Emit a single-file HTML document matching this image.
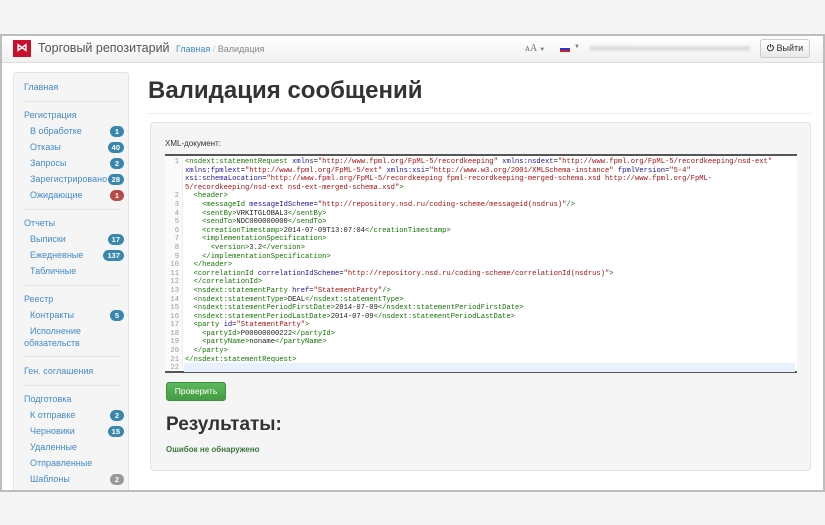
<!DOCTYPE html>
<html><head><meta charset="utf-8"><style>
*{margin:0;padding:0;box-sizing:border-box}
body{width:825px;height:525px;background:#f4f4f4;font-family:"Liberation Sans","Noto Sans CJK SC",sans-serif;position:relative;overflow:hidden}
.win{position:absolute;left:0;top:34px;width:825px;height:458px;background:#fff;border:2px solid #bdbdbd;overflow:hidden}
.nav{position:absolute;left:0;top:0;width:821px;height:27px;background:linear-gradient(#fff,#f0f0f0);border-bottom:1px solid #ddd}
.a{position:absolute;white-space:nowrap}
.side{position:absolute;left:11px;top:36px;width:116px;height:440px;background:#f5f5f5;border:1px solid #e3e3e3;border-radius:3px}
.si{position:absolute;font-size:9px;color:#428bca;white-space:nowrap}
.hr{position:absolute;left:10px;width:96px;border-top:1px solid #e5e5e5}
.b{position:absolute;right:4px;height:11px;border-radius:6px;background:#3a87ad;color:#fff;font-size:7.5px;font-weight:bold;text-align:center;line-height:11px;padding:0 4px;min-width:14px}
.panel{position:absolute;left:148px;top:86px;width:661px;height:349px;background:#f5f5f5;border:1px solid #e3e3e3;border-radius:4px}
.ed{position:absolute;left:14px;top:31px;width:632px;height:219px;background:#fff;border-top:2px solid #555;border-bottom:2px solid #555}
.gut{position:absolute;left:0;top:0;width:18px;height:215px;background:#fafafa;border-right:1px solid #eee}
pre{font-family:"Liberation Mono",monospace;font-size:7.15px;line-height:8.6px;color:#222}
.ln{position:absolute;left:0;top:2px;width:14px;text-align:right;color:#999}
.code{position:absolute;left:20px;top:2px}
.t{color:#170}.n{color:#219}.v{color:#a11}
</style></head><body>
<div class="win">
<div class="nav">
<div class="a" style="left:11px;top:4px;width:18px;height:17px;background:#c8102e;color:#fff;font-size:11px;font-weight:bold;text-align:center;line-height:17px">⋈</div>
<div class="a" style="left:36px;top:5px;font-size:12.5px;color:#555">Торговый репозитарий</div>
<div class="a" style="left:174px;top:8px;font-size:9px;color:#428bca">Главная <span style="color:#ccc">/</span> <span style="color:#888">Валидация</span></div>
<div class="a" style="left:523px;top:7px;font-size:10px;color:#777;font-family:'Liberation Serif',serif">ᴀA <span style="font-size:6px">▼</span></div>
<div class="a" style="left:558px;top:10px;width:10px;height:6px;background:linear-gradient(#fff 0 33%,#33c 33% 66%,#c22 66%)"></div>
<div class="a" style="left:572px;top:8px;font-size:6px;color:#777">▼</div>
<div class="a" style="left:588px;top:10px;width:160px;height:5px;background:#ddd;filter:blur(1px)"></div>
<div class="a" style="left:758px;top:3px;width:50px;height:19px;border:1px solid #ccc;border-radius:3px;background:linear-gradient(#fff,#e8e8e8);font-size:9px;color:#333;text-align:center;line-height:17px"><b>⏻</b> Выйти</div>
</div>
<div class="side">
<div class="si" style="left:10px;top:9px">Главная</div>
<div class="hr" style="top:28px"></div>
<div class="si" style="left:10px;top:37px">Регистрация</div>
<div class="si" style="left:16px;top:53px">В обработке</div><div class="b" style="top:53px">1</div>
<div class="si" style="left:16px;top:69px">Отказы</div><div class="b" style="top:69px">40</div>
<div class="si" style="left:16px;top:85px">Запросы</div><div class="b" style="top:85px">2</div>
<div class="si" style="left:16px;top:101px">Зарегистрировано</div><div class="b" style="top:101px">28</div>
<div class="si" style="left:16px;top:117px">Ожидающие</div><div class="b" style="top:117px;background:#b94a48">1</div>
<div class="hr" style="top:136px"></div>
<div class="si" style="left:10px;top:145px">Отчеты</div>
<div class="si" style="left:16px;top:161px">Выписки</div><div class="b" style="top:161px">17</div>
<div class="si" style="left:16px;top:177px">Ежедневные</div><div class="b" style="top:177px">137</div>
<div class="si" style="left:16px;top:193px">Табличные</div>
<div class="hr" style="top:212px"></div>
<div class="si" style="left:10px;top:221px">Реестр</div>
<div class="si" style="left:16px;top:237px">Контракты</div><div class="b" style="top:237px">5</div>
<div class="si" style="left:16px;top:253px">Исполнение</div>
<div class="si" style="left:10px;top:265px">обязательств</div>
<div class="hr" style="top:283px"></div>
<div class="si" style="left:10px;top:293px">Ген. соглашения</div>
<div class="hr" style="top:312px"></div>
<div class="si" style="left:10px;top:321px">Подготовка</div>
<div class="si" style="left:16px;top:337px">К отправке</div><div class="b" style="top:337px">2</div>
<div class="si" style="left:16px;top:353px">Черновики</div><div class="b" style="top:353px">15</div>
<div class="si" style="left:16px;top:369px">Удаленные</div>
<div class="si" style="left:16px;top:385px">Отправленные</div>
<div class="si" style="left:16px;top:401px">Шаблоны</div><div class="b" style="top:401px;background:#999">2</div>
</div>
<div class="a" style="left:146px;top:41px;font-size:24px;font-weight:bold;color:#333">Валидация сообщений</div>
<div class="a" style="left:146px;top:77px;width:663px;border-top:1px solid #eee"></div>
<div class="panel">
<div class="a" style="left:14px;top:16px;font-size:8px;color:#333">XML-документ:</div>
<div class="ed">
<div class="gut"></div>
<div class="a" style="left:19px;top:207px;width:611px;height:9px;background:#e8f2ff"></div>
<pre class="ln">1



2
3
4
5
6
7
8
9
10
11
12
13
14
15
16
17
18
19
20
21
22</pre>
<pre class="code"><span class="t">&lt;nsdext:statementRequest</span> <span class="n">xmlns</span>=<span class="v">"http://www.fpml.org/FpML-5/recordkeeping"</span> <span class="n">xmlns:nsdext</span>=<span class="v">"http://www.fpml.org/FpML-5/recordkeeping/nsd-ext"</span>
<span class="n">xmlns:fpmlext</span>=<span class="v">"http://www.fpml.org/FpML-5/ext"</span> <span class="n">xmlns:xsi</span>=<span class="v">"http://www.w3.org/2001/XMLSchema-instance"</span> <span class="n">fpmlVersion</span>=<span class="v">"5-4"</span>
<span class="n">xsi:schemaLocation</span>=<span class="v">"http://www.fpml.org/FpML-5/recordkeeping fpml-recordkeeping-merged-schema.xsd http://www.fpml.org/FpML-</span>
<span class="v">5/recordkeeping/nsd-ext nsd-ext-merged-schema.xsd"</span><span class="t">&gt;</span>
  <span class="t">&lt;header&gt;</span>
    <span class="t">&lt;messageId</span> <span class="n">messageIdScheme</span>=<span class="v">"http://repository.nsd.ru/coding-scheme/messageid(nsdrus)"</span><span class="t">/&gt;</span>
    <span class="t">&lt;sentBy&gt;</span>VRKITGLOBAL3<span class="t">&lt;/sentBy&gt;</span>
    <span class="t">&lt;sendTo&gt;</span>NDC000000000<span class="t">&lt;/sendTo&gt;</span>
    <span class="t">&lt;creationTimestamp&gt;</span>2014-07-09T13:07:04<span class="t">&lt;/creationTimestamp&gt;</span>
    <span class="t">&lt;implementationSpecification&gt;</span>
      <span class="t">&lt;version&gt;</span>3.2<span class="t">&lt;/version&gt;</span>
    <span class="t">&lt;/implementationSpecification&gt;</span>
  <span class="t">&lt;/header&gt;</span>
  <span class="t">&lt;correlationId</span> <span class="n">correlationIdScheme</span>=<span class="v">"http://repository.nsd.ru/coding-scheme/correlationId(nsdrus)"</span><span class="t">&gt;</span>
  <span class="t">&lt;/correlationId&gt;</span>
  <span class="t">&lt;nsdext:statementParty</span> <span class="n">href</span>=<span class="v">"StatementParty"</span><span class="t">/&gt;</span>
  <span class="t">&lt;nsdext:statementType&gt;</span>DEAL<span class="t">&lt;/nsdext:statementType&gt;</span>
  <span class="t">&lt;nsdext:statementPeriodFirstDate&gt;</span>2014-07-09<span class="t">&lt;/nsdext:statementPeriodFirstDate&gt;</span>
  <span class="t">&lt;nsdext:statementPeriodLastDate&gt;</span>2014-07-09<span class="t">&lt;/nsdext:statementPeriodLastDate&gt;</span>
  <span class="t">&lt;party</span> <span class="n">id</span>=<span class="v">"StatementParty"</span><span class="t">&gt;</span>
    <span class="t">&lt;partyId&gt;</span>P00000000222<span class="t">&lt;/partyId&gt;</span>
    <span class="t">&lt;partyName&gt;</span>noname<span class="t">&lt;/partyName&gt;</span>
  <span class="t">&lt;/party&gt;</span>
<span class="t">&lt;/nsdext:statementRequest&gt;</span>
</pre>
</div>
<div class="a" style="left:15px;top:259px;width:60px;height:19px;background:linear-gradient(#5cb85c,#449d44);border:1px solid #3e8f3e;border-radius:3px;color:#fff;font-size:8.5px;text-align:center;line-height:17px">Проверить</div>
<div class="a" style="left:15px;top:291px;font-size:19px;font-weight:bold;color:#333">Результаты:</div>
<div class="a" style="left:15px;top:322px;font-size:8px;font-weight:bold;color:#3c763d">Ошибок не обнаружено</div>
</div>
</div>
</body></html>
